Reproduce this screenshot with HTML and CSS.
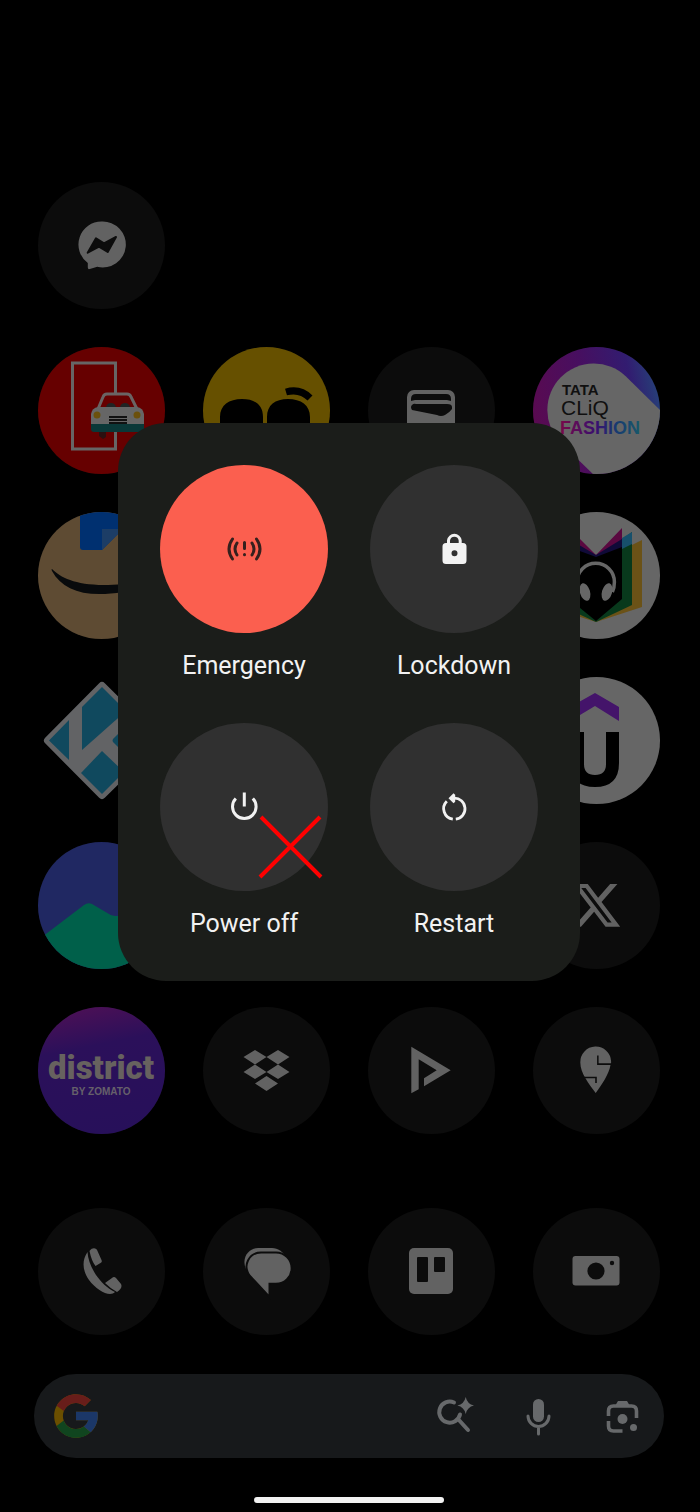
FILE: index.html
```html
<!DOCTYPE html>
<html lang="en">
<head>
	<meta charset="UTF-8">
	<meta name="viewport" content="width=device-width, initial-scale=1.0">
	<title>Power menu</title>
	<link rel="stylesheet" href="styles.css">
</head>
<body>
	<main class="home">
		<div class="apps">
			<button class="app first" aria-label="Messenger">
				<svg viewBox="0 0 127 127">
					<path class="glyph" d="M63.800 39.500a23 23 0 1 1-4.500 45.300l-7.500 2.200c-1.500.5-2-.3-2-2V81A23 23 0 0 1 63.800 39.500z"/>
					<path class="ink" d="M49.700 70.700 58 56.300l8 5L78 55l-8.300 15-8.700-5.300z" stroke="#0c0c0c" stroke-width="2" stroke-linejoin="round"/>
				</svg>
			</button>

			<button class="app" aria-label="Car pooling">
				<svg viewBox="0 0 127 127">
					<rect width="127" height="127" fill="#660000"/>
					<rect x="34.500" y="16" width="43" height="86" fill="none" stroke="#666" stroke-width="3"/>
					<path d="M61 85h7v5l-3 2-4-3z" fill="#2b1010"/>
					<path d="M60 62l5-12q1-3 4-3h20q3 0 4 3l6 12" fill="#600" stroke="#6a6464" stroke-width="3"/>
					<path d="M68 62v-2q1-4 5-4t5 4v2zM82 62v-2q1-4 5-4t5 4v2z" fill="#202424"/>
					<path d="M53 78V67q1-6 7-7h39q6 1 7 7v11z" fill="#666"/>
					<path d="M53 77h53v5q0 3-3 3H56q-3 0-3-3z" fill="#0a3838"/>
					<circle cx="59" cy="68" r="3.500" fill="#6b500c"/>
					<circle cx="99" cy="68" r="3.500" fill="#6b500c"/>
					<path d="M71 70h18M71 73h18M71 76h18" stroke="#111" stroke-width="2"/>
				</svg>
			</button>

			<button class="app" aria-label="Yellow face">
				<svg viewBox="0 0 127 127">
					<rect width="127" height="127" fill="#665000"/>
					<path d="M17 76V70c0-12 9-18 22-18s21 6 21 18v6zM64 76V70c0-12 8-18 21-18s22 6 22 18v6z"/>
					<path d="M83 45q14-4 24 6" fill="none" stroke="#000" stroke-width="7"/>
				</svg>
			</button>

			<button class="app" aria-label="Wallet">
				<svg viewBox="0 0 127 127">
					<rect class="glyph" x="39" y="43" width="48" height="42" rx="7"/>
					<path class="ink" d="M43 54v-2q0-5 5-5h30q5 0 5 5v2l-4-1H47zM44 58q2-2 4-1h31q5 0 5 3v2q-2 3-7 6-4 2-8 0L44 63q-2-3 0-5z"/>
				</svg>
			</button>

			<button class="app" aria-label="Tata CLiQ Fashion">
				<svg viewBox="0 0 127 127">
					<defs>
						<linearGradient id="cliq" x1="0" y1=".6" x2="1" y2=".4">
							<stop offset="0" stop-color="#5a0a50"/>
							<stop offset=".45" stop-color="#470f60"/>
							<stop offset=".8" stop-color="#321c70"/>
							<stop offset="1" stop-color="#263f78"/>
						</linearGradient>
						<linearGradient id="fashion">
							<stop offset="0" stop-color="#780848"/>
							<stop offset=".45" stop-color="#391070"/>
							<stop offset=".7" stop-color="#183a70"/>
							<stop offset="1" stop-color="#17586a"/>
						</linearGradient>
					</defs>
					<rect width="127" height="127" fill="url(#cliq)"/>
					<path d="M93 29.500 130 66v64H63L27.500 95.500A46.500 46.500 0 0 1 93 29.500z" fill="#666"/>
					<text class="tata" x="29" y="48">TATA</text>
					<text class="cliq" x="28" y="68">CLiQ</text>
					<text class="fashion" x="27" y="87" fill="url(#fashion)">FASHION</text>
				</svg>
			</button>

			<button class="app" aria-label="Amazon">
				<svg viewBox="0 0 127 127">
					<rect width="127" height="127" fill="#5e4b33"/>
					<path d="M42 0h43v17L64 38H45q-3 0-3-3z" fill="#003070"/>
					<path d="M64 17h21L64 38z" fill="#1c3d66"/>
					<path d="M14 57c10 10 29 19 71 15v8c-37 6-60-1-71-21q-1-2 0-2z" fill="#080a0c"/>
				</svg>
			</button>
			<button class="app" aria-label="App"></button>
			<button class="app" aria-label="App"></button>
			<button class="app" aria-label="Audiobooks">
				<svg viewBox="0 0 127 127">
					<rect width="127" height="127" fill="#666"/>
					<path d="M109 28v67l-46 15-47-15V28l47 23z" fill="#6b5217"/>
					<path d="M99 20v73l-36 17-37-17V20l37 27z" fill="#08391c"/>
					<path d="M89 26l10-6v12l-10 5zM36 26l-10-6v12l10 5z" fill="#17506c"/>
					<path d="M89 16v18L63 50 36 34V16l27 27z" fill="#5a0840"/>
					<path d="M89 27v9L63 50 36 36v-9l27 16z" fill="#100a38"/>
					<path d="M89 35v52l-26 22-27-22V35l27 10z"/>
					<path d="M46 80c-2-4-2-8-2-10a18.700 18.700 0 0 1 37.400 0c0 2 0 6-2 10" fill="none" stroke="#666" stroke-width="3.500"/>
					<ellipse cx="52" cy="80" rx="5" ry="9" fill="#666" transform="rotate(-16 52 80)"/>
					<ellipse cx="74" cy="80" rx="5" ry="9" fill="#666" transform="rotate(16 74 80)"/>
				</svg>
			</button>

			<button class="app bare" aria-label="Kodi">
				<svg viewBox="0 0 127 127">
					<path d="M64 9l55 54.500L64 118 10 63.500z" fill="#626365" stroke="#626365" stroke-width="8" stroke-linejoin="round"/>
					<g fill="#10495e">
						<path d="M11 63.500 31 43v40z"/>
						<path d="M44 30l20-20 24 24-44 39z"/>
						<path d="M75 62l14-14 16 15-16 16-14-14q-1-1 0-3z"/>
						<path d="M43 96l21-22 22 21-22 22z"/>
					</g>
				</svg>
			</button>
			<button class="app" aria-label="App"></button>
			<button class="app" aria-label="App"></button>
			<button class="app" aria-label="Udemy">
				<svg viewBox="0 0 127 127">
					<rect width="127" height="127" fill="#666"/>
					<path d="M62 16l24 14v14L62 29 37 44V30z" fill="#44146a"/>
					<path d="M37 55h14v32q0 11 11 11t11-11V55h13v31q0 24-24 24T37 86z"/>
				</svg>
			</button>

			<button class="app" aria-label="Wallpapers">
				<svg viewBox="0 0 127 127">
					<rect width="127" height="127" fill="#202862"/>
					<path d="M0 98l46-35q4-3 8-1l17 10q3 2 9 2h47v53H0z" fill="#00604a"/>
				</svg>
			</button>
			<button class="app" aria-label="App"></button>
			<button class="app" aria-label="App"></button>
			<button class="app" aria-label="X">
				<svg viewBox="0 0 127 127">
					<path class="glyph" transform="translate(37 37) scale(2.200)" d="M18.244 2.250h3.308l-7.227 8.260 8.502 11.240H16.170l-5.214-6.817L4.990 21.750H1.680l7.730-8.835L1.254 2.250H8.080l4.713 6.231zm-1.161 17.520h1.833L7.084 4.126H5.117z"/>
				</svg>
			</button>

			<button class="app" aria-label="District by Zomato">
				<svg viewBox="0 0 127 127">
					<defs>
						<linearGradient id="district" x1=".4" y1="0" x2=".6" y2="1">
							<stop offset="0" stop-color="#4a1056"/>
							<stop offset=".3" stop-color="#2b105a"/>
							<stop offset="1" stop-color="#27105a"/>
						</linearGradient>
					</defs>
					<rect width="127" height="127" fill="url(#district)"/>
					<text class="district" x="63" y="72">district</text>
					<text class="zomato" x="63" y="88">BY ZOMATO</text>
				</svg>
			</button>
			<button class="app" aria-label="Dropbox">
				<svg viewBox="0 0 127 127">
					<path class="glyph" d="M52 43l11.500 7L52 57.500 40.500 50zM75 43l11.500 7L75 57.500 63.500 50zM52 57.500 63.500 65 52 72 40.500 65zM75 57.500 86.500 65 75 72 63.500 65zM63.500 69 75 76.500l-11.500 7.500L52 76.500z"/>
				</svg>
			</button>
			<button class="app" aria-label="Video player">
				<svg viewBox="0 0 127 127">
					<path class="glyph" d="M43.300 39.700 82.700 63.300 56 79.300v-8l12.700-8-18-11v30l-7.400 4z"/>
				</svg>
			</button>
			<button class="app" aria-label="Swiggy">
				<svg viewBox="0 0 127 127">
					<path class="glyph" d="M62.700 86C56 77 47.300 66 47.300 55.500a15.400 15.400 0 0 1 30.800-1v1.700H65.600V48.500h-1.500V58h13.400c-1.500 9-8.500 19.500-14.800 28z"/>
					<path d="M51 70.500h12v5.500" fill="none" stroke="#0c0c0c" stroke-width="1.600"/>
				</svg>
			</button>
		</div>

		<div class="apps dock">
			<button class="app" aria-label="Phone">
				<svg viewBox="0 0 127 127">
					<path class="glyph" d="M49.500 44C44 52 44 62 51 72c6 8 15 14 21 14 2 0 4-1 5-2-8-4-14-10-19-17-5-8-8-15-8.500-23z"/>
					<path class="glyph" d="M51.500 43c3-4 7-3 8 0l4 9q1 2-1 3l-5 3q-4-5-6-15zM67 75l7-5q2-2 4 0l5 6q2 4-4 8-6-3-12-9z"/>
				</svg>
			</button>
			<button class="app" aria-label="Messages">
				<svg viewBox="0 0 127 127">
					<path class="glyph" d="M43 61C38 49 46 40 55 40h14c6 0 11 4 13 8L60 64z"/>
					<path class="glyph" stroke="#0c0c0c" stroke-width="2" d="M58 44.500h15a15.600 15.600 0 0 1 0 31.300h-6.500V89L47 68C39 58 46 44.500 58 44.500z"/>
				</svg>
			</button>
			<button class="app" aria-label="Trello">
				<svg viewBox="0 0 127 127">
					<rect class="glyph" x="41" y="40" width="44" height="46" rx="5"/>
					<rect class="ink" x="49" y="49" width="11" height="25" rx="1"/>
					<rect class="ink" x="66" y="49" width="11" height="15" rx="1"/>
				</svg>
			</button>
			<button class="app" aria-label="Camera">
				<svg viewBox="0 0 127 127">
					<rect class="glyph" x="39.500" y="48" width="47" height="29.500" rx="3"/>
					<circle class="ink" cx="63" cy="63" r="8.600"/>
					<circle class="ink" cx="79" cy="55" r="2.200"/>
				</svg>
			</button>
		</div>

		<form class="search">
			<svg class="google" viewBox="2 2 44 44">
				<path fill="#6b4f00" d="M43.611 20.083H42V20H24v8h11.303c-1.649 4.657-6.080 8-11.303 8-6.627 0-12-5.373-12-12s5.373-12 12-12c3.059 0 5.842 1.154 7.961 3.039l5.657-5.657C34.046 6.053 29.268 4 24 4 12.955 4 4 12.955 4 24s8.955 20 20 20 20-8.955 20-20c0-1.341-.138-2.650-.389-3.917z"/>
				<path fill="#681d1a" d="M6.306 14.691l6.571 4.819C14.655 15.108 18.961 12 24 12c3.059 0 5.842 1.154 7.961 3.039l5.657-5.657C34.046 6.053 29.268 4 24 4 16.318 4 9.656 8.337 6.306 14.691z"/>
				<path fill="#10451f" d="M24 44c5.166 0 9.860-1.977 13.409-5.192l-6.190-5.238A11.910 11.910 0 0 1 24 36c-5.202 0-9.619-3.317-11.283-7.946l-6.522 5.025C9.505 39.556 16.227 44 24 44z"/>
				<path fill="#1b3768" d="M43.611 20.083H42V20H24v8h11.303a12.040 12.040 0 0 1-4.087 5.571l6.193 5.238C36.971 39.205 44 34 44 24c0-1.341-.138-2.650-.389-3.917z"/>
			</svg>
			<input type="text" aria-label="Search">
			<button type="button" aria-label="AI search">
				<svg class="line" viewBox="0 0 40 40">
					<path d="M18 6.500a10.500 10.500 0 1 0 6 12M22 23l10 11" stroke-width="4"/>
					<path class="solid" d="M29.700 1q1.500 7 8.300 8.500-6.800 1.500-8.300 8.500-1.500-7-8.300-8.500 6.800-1.500 8.300-8.500z"/>
				</svg>
			</button>
			<button type="button" aria-label="Voice search">
				<svg class="line" viewBox="0 0 40 40">
					<rect class="solid" x="14" y="3" width="11" height="23" rx="5.500"/>
					<path d="M9 20a10.500 10.500 0 0 0 21 0M19.500 31v7" stroke-width="3"/>
				</svg>
			</button>
			<button type="button" aria-label="Lens">
				<svg class="line" viewBox="0 0 40 40">
					<path d="M6.500 20v-5q0-5 5-5h18q5 0 5 5v7M6.500 25v5q0 5 5 5h9" stroke-width="3.600" stroke-linecap="butt"/>
					<path class="solid" d="M13 10l3-5h9l3 5z"/>
					<circle class="solid" cx="20.500" cy="23" r="5"/>
					<circle class="solid" cx="31.500" cy="31.500" r="3.500"/>
				</svg>
			</button>
		</form>

		<div class="home-bar"></div>
	</main>

	<div class="overlay">
		<div class="power-menu" role="dialog" aria-label="Power menu">
			<button class="action">
				<span class="disc emergency">
					<svg class="line" viewBox="0 0 48 48">
						<path d="M12.500 14q-7 10 0 20M36.500 14q7 10 0 20M17 18q-4 6 0 12M32 18q4 6 0 12M24.500 17.500v6M24.500 29.500v.2" stroke-width="3"/>
					</svg>
				</span>
				<span>Emergency</span>
			</button>
			<button class="action">
				<span class="disc">
					<svg class="line" viewBox="0 0 48 48">
						<path d="M18.500 19v-3.500a5.900 5.900 0 0 1 11.700 0V19" stroke-width="3"/>
						<path class="solid" fill-rule="evenodd" d="M16 18h17q3.500 0 3.500 3.500v14q0 3.500-3.500 3.500H16q-3.500 0-3.500-3.500v-14Q12.500 18 16 18zm8.500 7.200a3 3 0 1 0 0 6 3 3 0 1 0 0-6z"/>
					</svg>
				</span>
				<span>Lockdown</span>
			</button>
			<button class="action">
				<span class="disc">
					<svg class="line" viewBox="0 0 48 48">
						<path d="M24.300 9.500v14M15.800 15.500a11.800 11.800 0 1 0 17 0" stroke-width="3" stroke-linecap="butt"/>
					</svg>
					<svg class="cross" viewBox="0 0 66 66">
						<path d="M3 2l60 60M62 2 2 62"/>
					</svg>
				</span>
				<span>Power off</span>
			</button>
			<button class="action">
				<span class="disc">
					<svg class="line" viewBox="0 0 48 48">
						<path d="M22.800 36.200A10.600 10.600 0 0 1 16.800 18.200M24 15.100A10.600 10.600 0 0 1 25.800 36.200" stroke-width="2.800" stroke-linecap="butt"/>
						<path class="solid" d="M18.500 15.200 23.500 10.200l1.700 1.500v7l-1.700 1.500z"/>
					</svg>
				</span>
				<span>Restart</span>
			</button>
		</div>
	</div>
</body>
</html>
```
FILE: styles.css
```css
:root {
	--disc: #0c0c0c;
	--glyph: #626262;
	--panel: #1b1d1a;
}

* { box-sizing: border-box; padding: 0; margin: 0; }

body {
	position: relative;
	background: #000;
	font-family: Roboto, "Liberation Sans", sans-serif;
}

button {
	border: none;
	background: none;
	color: inherit;
	font: inherit;
}

svg { display: block; }

.home {
	min-height: 100vh;
	padding: 182px 40px 9px 38px;
}

.apps {
	display: grid;
	grid-template-columns: repeat(4, 127px);
	justify-content: space-between;
	row-gap: 38px;
}

.dock { margin-top: 74px; }

.app {
	height: 127px;
	border-radius: 50%;
	background: var(--disc);
	overflow: hidden;
}

/* first app is alone on its row */
.app.first + .app { grid-column: 1; }

.app.bare {
	background: none;
	border-radius: 0;
}

.glyph { fill: var(--glyph); }
.ink { fill: var(--disc); }

.tata {
	font: bold 15px "Liberation Sans", sans-serif;
	fill: #101010;
}

.cliq {
	font: 21px "Liberation Sans", sans-serif;
	fill: #101010;
}

.fashion { font: bold 18px "Liberation Sans", sans-serif; }

.district {
	font: 900 33px Roboto, "Liberation Sans", sans-serif;
	text-anchor: middle;
	fill: #67625f;
}

.zomato {
	font: bold 10px "Liberation Sans", sans-serif;
	text-anchor: middle;
	fill: #66606a;
}

.search {
	display: flex;
	align-items: center;
	gap: 43px;
	height: 84px;
	margin: 39px -4px 0;
	padding: 0 22px 0 18px;
	border-radius: 42px;
	background: #17191b;
	color: #67696b;
}

.search input {
	flex: 1;
	min-width: 0;
	border: none;
	outline: none;
	background: none;
	color: inherit;
	font-size: 24px;
}

.search button svg {
	width: 40px;
	height: 40px;
}

.google {
	width: 48px;
	height: 48px;
}

.line {
	fill: none;
	stroke: currentColor;
	stroke-linecap: round;
}

.solid {
	fill: currentColor;
	stroke: none;
}

.home-bar {
	width: 190px;
	height: 6px;
	margin: 39px auto 0;
	border-radius: 3px;
	background: #f2f2f2;
}

.overlay {
	position: absolute;
	inset: 0;
	display: flex;
	justify-content: center;
	align-items: flex-start;
	padding: 423px 2px 0 0;
}

.power-menu {
	display: grid;
	grid-template-columns: repeat(2, 168px);
	gap: 43px 42px;
	padding: 42px 42px 43px;
	border-radius: 48px;
	background: var(--panel);
	color: #f2f2f2;
}

.action {
	display: flex;
	flex-direction: column;
	align-items: center;
	gap: 19px;
	font-size: 25px;
	line-height: 28px;
}

.disc {
	position: relative;
	display: grid;
	place-items: center;
	width: 168px;
	height: 168px;
	border-radius: 50%;
	background: #303030;
}

.disc .line {
	width: 48px;
	height: 48px;
}

.emergency {
	background: #fb5f4f;
	color: #35201d;
}

/* mark laid over the power off button */
.cross {
	position: absolute;
	left: 98px;
	top: 92px;
	width: 66px;
	height: 66px;
	stroke: #f00;
	stroke-width: 4;
}
```
